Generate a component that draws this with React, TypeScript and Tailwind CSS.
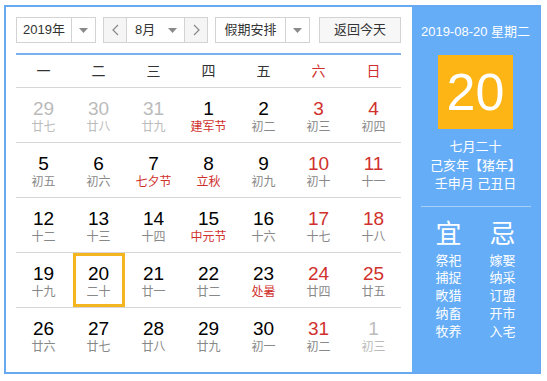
import React from 'react';

type Day = { n: number; l: string; muted?: boolean; redNum?: boolean; redLunar?: boolean; today?: boolean };

const weeks: Day[][] = [
  [
    { n: 29, l: '廿七', muted: true },
    { n: 30, l: '廿八', muted: true },
    { n: 31, l: '廿九', muted: true },
    { n: 1, l: '建军节', redLunar: true },
    { n: 2, l: '初二' },
    { n: 3, l: '初三', redNum: true },
    { n: 4, l: '初四', redNum: true },
  ],
  [
    { n: 5, l: '初五' },
    { n: 6, l: '初六' },
    { n: 7, l: '七夕节', redLunar: true },
    { n: 8, l: '立秋', redLunar: true },
    { n: 9, l: '初九' },
    { n: 10, l: '初十', redNum: true },
    { n: 11, l: '十一', redNum: true },
  ],
  [
    { n: 12, l: '十二' },
    { n: 13, l: '十三' },
    { n: 14, l: '十四' },
    { n: 15, l: '中元节', redLunar: true },
    { n: 16, l: '十六' },
    { n: 17, l: '十七', redNum: true },
    { n: 18, l: '十八', redNum: true },
  ],
  [
    { n: 19, l: '十九' },
    { n: 20, l: '二十', today: true },
    { n: 21, l: '廿一' },
    { n: 22, l: '廿二' },
    { n: 23, l: '处暑', redLunar: true },
    { n: 24, l: '廿四', redNum: true },
    { n: 25, l: '廿五', redNum: true },
  ],
  [
    { n: 26, l: '廿六' },
    { n: 27, l: '廿七' },
    { n: 28, l: '廿八' },
    { n: 29, l: '廿九' },
    { n: 30, l: '初一' },
    { n: 31, l: '初二', redNum: true },
    { n: 1, l: '初三', muted: true },
  ],
];

const weekdays = ['一', '二', '三', '四', '五', '六', '日'];
const yi = ['祭祀', '捕捉', '畋猎', '纳畜', '牧养'];
const ji = ['嫁娶', '纳采', '订盟', '开市', '入宅'];

const Caret = () => (
  <svg width="9" height="5" viewBox="0 0 9 5" className="block">
    <path d="M0 0h9L4.5 5z" fill="#8a8a8a" />
  </svg>
);

const Chevron = ({ left }: { left?: boolean }) => (
  <svg width="7" height="12" viewBox="0 0 7 12" className="block">
    <path d={left ? 'M6 1L1 6l5 5' : 'M1 1l5 5-5 5'} fill="none" stroke="#888" strokeWidth="1.2" />
  </svg>
);

export default function App() {
  return (
    <div
      className="w-[547px] h-[381px] bg-white pt-[5px] pl-[4px]"
      style={{ fontFamily: '"Liberation Sans", "Noto Sans CJK SC", sans-serif' }}
    >
      <div className="w-[537px] h-[369px] border-2 border-[#68aaf2] flex">
        {/* calendar */}
        <div className="w-[406px] pl-[10px] pr-[11px] pt-[10px]">
          <div className="flex h-[26px] text-[13px] text-[#333]">
            <div className="w-[80px] flex border border-[#d3d3d3] bg-white">
              <div className="w-[55px] flex items-center justify-center border-r border-[#d3d3d3]">2019年</div>
              <div className="flex-1 flex items-center justify-center"><Caret /></div>
            </div>
            <div className="ml-[7px] w-[105px] flex border border-[#d3d3d3]">
              <div className="w-[23px] flex items-center justify-center bg-[#f5f5f5] border-r border-[#d3d3d3]"><Chevron left /></div>
              <div className="flex-1 flex items-center bg-white pl-[8px] pr-[7px] justify-between">
                <span>8月</span>
                <Caret />
              </div>
              <div className="w-[23px] flex items-center justify-center bg-[#f5f5f5] border-l border-[#d3d3d3]"><Chevron /></div>
            </div>
            <div className="ml-[7px] w-[95px] flex border border-[#d3d3d3] bg-white">
              <div className="w-[70px] flex items-center justify-center border-r border-[#d3d3d3]">假期安排</div>
              <div className="flex-1 flex items-center justify-center"><Caret /></div>
            </div>
            <div className="ml-[9px] w-[82px] flex items-center justify-center border border-[#d3d3d3] bg-[#f7f7f7]">返回今天</div>
          </div>

          <div className="mt-[10px] h-[2px] bg-[#79b2ec]" />

          <div className="grid grid-cols-7 h-[33px] border-b border-[#d6d6d6] text-[14px] leading-[33px]">
            {weekdays.map((w, i) => (
              <div key={w} className={`text-center ${i >= 5 ? 'text-[#d0312d]' : 'text-[#333]'}`}>{w}</div>
            ))}
          </div>

          {weeks.map((week, wi) => (
            <div
              key={wi}
              className={`grid grid-cols-7 h-[55px] ${wi < weeks.length - 1 ? 'border-b border-[#d6d6d6]' : ''}`}
            >
              {week.map((d, di) => (
                <div key={di} className="flex items-stretch justify-center">
                  <div
                    className={`flex flex-col items-center w-[52px] ${d.today ? 'border-[3px] border-[#f4b521] pt-[7px]' : 'pt-[10px]'}`}
                  >
                    <span
                      className={`text-[19px] leading-[21px] ${
                        d.muted ? 'text-[#bbbbbb]' : d.redNum ? 'text-[#d0312d]' : 'text-black'
                      }`}
                    >
                      {d.n}
                    </span>
                    <span
                      className={`text-[12px] leading-[16px] ${
                        d.muted ? 'text-[#bbbbbb]' : d.redLunar ? 'text-[#d0312d]' : 'text-[#888]'
                      }`}
                    >
                      {d.l}
                    </span>
                  </div>
                </div>
              ))}
            </div>
          ))}
        </div>

        {/* side panel */}
        <div className="flex-1 bg-[#66adf8] flex flex-col items-center text-white">
          <div className="mt-[16px] text-[13px] leading-[18px]">2019-08-20 星期二</div>
          <div className="mt-[14px] w-[75px] h-[74px] bg-[#fdb515] flex items-center justify-center text-[52px] leading-none">20</div>
          <div className="mt-[9px] text-[13px] leading-[18.5px] text-center">
            <div>七月二十</div>
            <div>己亥年【猪年】</div>
            <div>壬申月 己丑日</div>
          </div>
          <div className="mt-[12px] w-[110px] h-px bg-[#a9d0fa]" />
          <div className="mt-[12px] flex gap-[28px]">
            <div className="flex flex-col items-center">
              <div className="text-[26px] leading-[30px]">宜</div>
              <div className="mt-[3px] text-[13px] leading-[17.8px]">
                {yi.map(t => <div key={t}>{t}</div>)}
              </div>
            </div>
            <div className="flex flex-col items-center">
              <div className="text-[26px] leading-[30px]">忌</div>
              <div className="mt-[3px] text-[13px] leading-[17.8px]">
                {ji.map(t => <div key={t}>{t}</div>)}
              </div>
            </div>
          </div>
        </div>
      </div>
    </div>
  );
}
